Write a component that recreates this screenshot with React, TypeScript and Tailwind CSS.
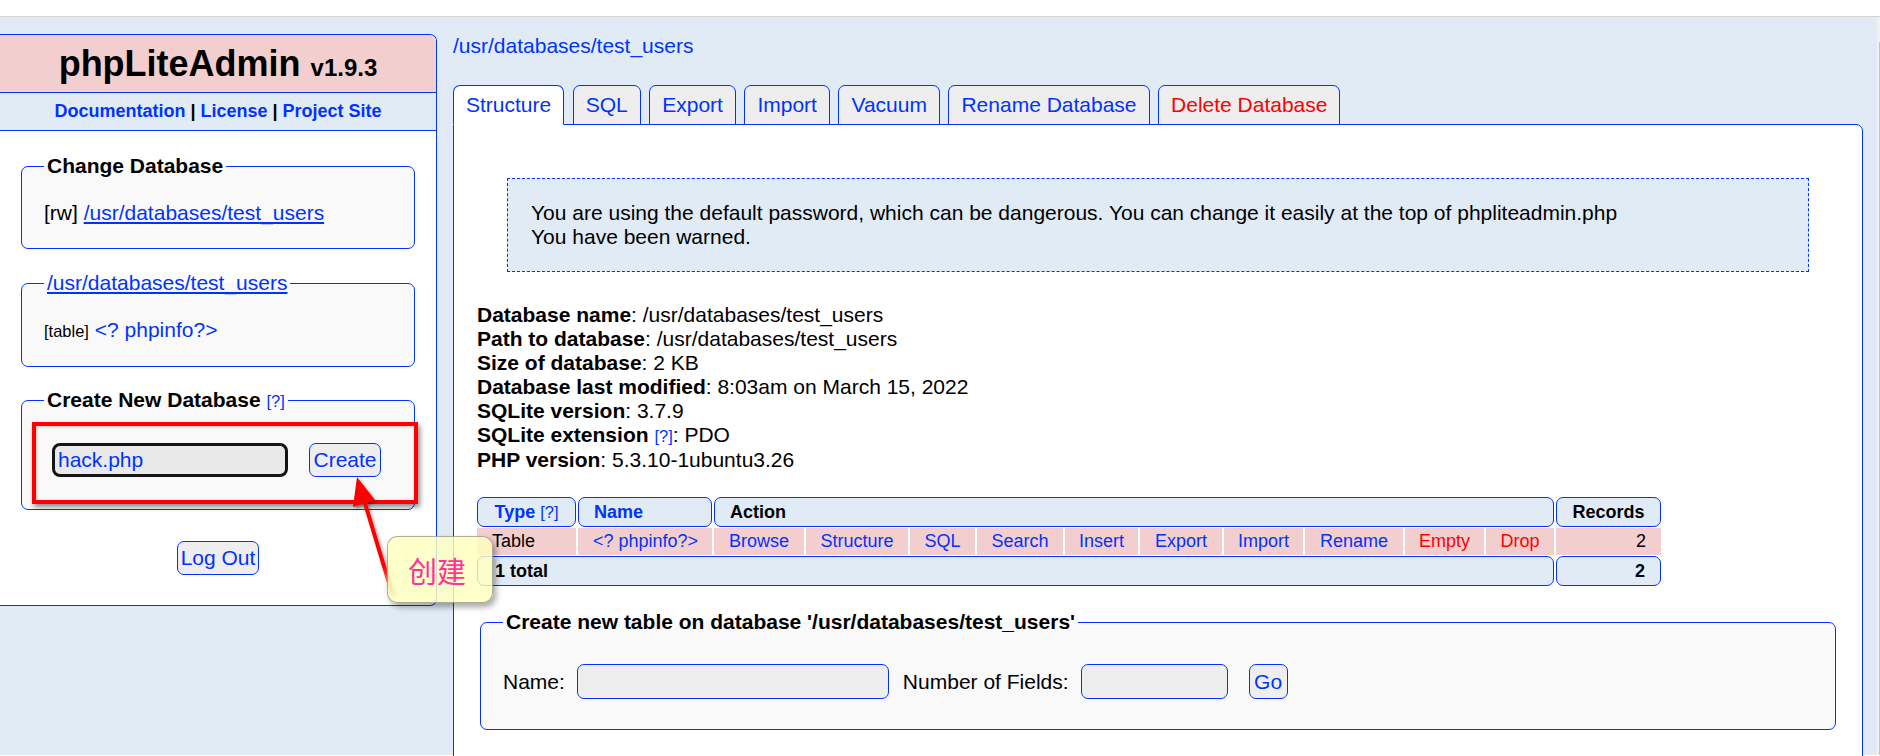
import React from "react";

const actions = [
    { label: "Browse", danger: false },
    { label: "Structure", danger: false },
    { label: "SQL", danger: false },
    { label: "Search", danger: false },
    { label: "Insert", danger: false },
    { label: "Export", danger: false },
    { label: "Import", danger: false },
    { label: "Rename", danger: false },
    { label: "Empty", danger: true },
    { label: "Drop", danger: true },
];

const tabs = [
    { label: "Structure", active: true },
    { label: "SQL" },
    { label: "Export" },
    { label: "Import" },
    { label: "Vacuum" },
    { label: "Rename Database" },
    { label: "Delete Database", danger: true },
];

const info: [string, string, boolean?][] = [
    ["Database name", "/usr/databases/test_users"],
    ["Path to database", "/usr/databases/test_users"],
    ["Size of database", "2 KB"],
    ["Database last modified", "8:03am on March 15, 2022"],
    ["SQLite version", "3.7.9"],
    ["SQLite extension", "PDO", true],
    ["PHP version", "5.3.10-1ubuntu3.26"],
];

function Sidebar() {
    return (
        <div className="mt-[17px] w-[437px] shrink-0 overflow-hidden rounded-r-[7px] border-y border-r border-[#0033ff] bg-white pb-[30px]">
            <h1 className="h-[57px] bg-[#f3cece] text-center text-[36px] font-bold leading-[57px]">
                phpLiteAdmin <span className="text-[24px]">v1.9.3</span>
            </h1>
            <div className="h-[39px] border-y border-[#0033ff] bg-[#e0ebf6] text-center text-[18px] font-bold leading-[37px]">
                <a className="text-[#0033ff]">Documentation</a> | <a className="text-[#0033ff]">License</a> |{" "}
                <a className="text-[#0033ff]">Project Site</a>
            </div>

            {/* Change Database */}
            <fieldset className="mx-[21px] mt-[23px] rounded-[7px] border border-[#0033ff] bg-[#f9f9f9] px-[22px] pb-[23px] pt-[23px]">
                <legend className="px-[3px] font-bold">Change Database</legend>
                <div>
                    [rw] <a className="text-[#0033ff] underline">/usr/databases/test_users</a>
                </div>
            </fieldset>

            {/* Tables of current db */}
            <fieldset className="mx-[21px] mt-[22px] rounded-[7px] border border-[#0033ff] bg-[#f9f9f9] px-[22px] pb-[23px] pt-[23px]">
                <legend className="px-[3px]">
                    <a className="text-[#0033ff] underline">/usr/databases/test_users</a>
                </legend>
                <div>
                    <span className="text-[16.5px]">[table]</span>{" "}
                    <a className="text-[#0033ff]">&lt;? phpinfo?&gt;</a>
                </div>
            </fieldset>

            {/* Create New Database */}
            <fieldset className="mx-[21px] mt-[21px] rounded-[7px] border border-[#0033ff] bg-[#f9f9f9] px-[22px] pb-[24px] pt-[22px]">
                <legend className="px-[3px] font-bold">
                    Create New Database <span className="text-[16.5px] font-normal text-[#0033ff]">[?]</span>
                </legend>
                <div className="flex items-center py-[8px]">
                    <div className="ml-[8px] flex h-[34px] w-[236px] items-center rounded-[8px] border-[3px] border-[#151515] bg-[#e9e9e9] px-[3px] text-[#0033ff]">
                        hack.php
                    </div>
                    <button className="ml-[21px] h-[34px] w-[72px] rounded-[7px] border border-[#0033ff] bg-[#eeeeee] text-[#0033ff]">
                        Create
                    </button>
                </div>
            </fieldset>

            <button className="mx-auto mt-[31px] block h-[34px] w-[82px] rounded-[7px] border border-[#0033ff] bg-[#eeeeee] text-[#0033ff]">
                Log Out
            </button>
        </div>
    );
}

function TableList() {
    return (
        <div className="mt-[25px] grid w-[1184px] grid-cols-[99px_134px_90px_102px_65px_86px_73px_82px_79px_98px_79px_68px_105px] gap-x-[2px] gap-y-px text-[18px] leading-[21px]">
            {/* header */}
            <div className="flex h-[30px] items-center justify-center rounded-[7px] border border-[#0033ff] bg-[#e0ebf6] font-bold text-[#0033ff]">
                Type&nbsp;<span className="text-[16.5px] font-normal">[?]</span>
            </div>
            <div className="flex h-[30px] items-center rounded-[7px] border border-[#0033ff] bg-[#e0ebf6] pl-[15px] font-bold text-[#0033ff]">
                Name
            </div>
            <div className="col-span-10 flex h-[30px] items-center rounded-[7px] border border-[#0033ff] bg-[#e0ebf6] pl-[15px] font-bold">
                Action
            </div>
            <div className="flex h-[30px] items-center justify-center rounded-[7px] border border-[#0033ff] bg-[#e0ebf6] font-bold">
                Records
            </div>

            {/* row */}
            <div className="flex h-[27px] items-center bg-[#f3cece] pl-[15px]">Table</div>
            <div className="flex h-[27px] items-center bg-[#f3cece] pl-[15px] text-[#0033ff]">&lt;? phpinfo?&gt;</div>
            {actions.map((a) => (
                <div
                    key={a.label}
                    className={
                        "flex h-[27px] items-center justify-center bg-[#f3cece] " +
                        (a.danger ? "text-[#ff0000]" : "text-[#0033ff]")
                    }
                >
                    {a.label}
                </div>
            ))}
            <div className="flex h-[27px] items-center justify-end bg-[#f3cece] pr-[15px]">2</div>

            {/* total */}
            <div className="col-span-12 flex h-[30px] items-center rounded-[7px] border border-[#0033ff] bg-[#e0ebf6] pl-[17px] font-bold">
                1 total
            </div>
            <div className="flex h-[30px] items-center justify-end rounded-[7px] border border-[#0033ff] bg-[#e0ebf6] pr-[15px] font-bold">
                2
            </div>
        </div>
    );
}

function Content() {
    return (
        <div className="min-w-0 flex-1 pl-[16px] pr-[14px] pt-[17px]">
            <a className="block text-[#0033ff]">/usr/databases/test_users</a>

            <div className="relative z-10 -mb-px mt-[27px] flex items-end gap-[8.5px]">
                {tabs.map((t) => (
                    <div
                        key={t.label}
                        className={
                            "rounded-t-[7px] border border-[#0033ff] px-[12px] py-[7px] " +
                            (t.active ? "border-b-white bg-white " : "bg-[#eeeeee] ") +
                            (t.danger ? "text-[#ff0000]" : "text-[#0033ff]")
                        }
                    >
                        {t.label}
                    </div>
                ))}
            </div>

            <div className="rounded-b-[7px] rounded-tr-[7px] border border-[#0033ff] bg-white px-[23px] pb-[60px] pt-[23px]">
                <div className="mx-[30px] mt-[30px] border border-dashed border-[#0033ff] bg-[#e0ebf6] px-[23px] py-[22px]">
                    You are using the default password, which can be dangerous. You can change it easily at the top of
                    phpliteadmin.php
                    <br />
                    You have been warned.
                </div>

                <div className="mt-[31px]">
                    {info.map(([k, v, help]) => (
                        <div key={k}>
                            <b>{k}</b>
                            {help && (
                                <>
                                    {" "}
                                    <span className="text-[16.5px] text-[#0033ff]">[?]</span>
                                </>
                            )}
                            : {v}
                        </div>
                    ))}
                </div>

                <TableList />

                <fieldset className="mx-[3px] mt-[24px] rounded-[7px] border border-[#0033ff] bg-[#f9f9f9] px-[22px] pb-[22px] pt-[22px]">
                    <legend className="px-[3px] font-bold">Create new table on database '/usr/databases/test_users'</legend>
                    <div className="flex items-center py-[8px]">
                        <span>Name:</span>
                        <div className="ml-[12px] h-[35px] w-[312px] rounded-[7px] border border-[#0033ff] bg-[#eeeeee]" />
                        <span className="ml-[14px]">Number of Fields:</span>
                        <div className="ml-[12px] h-[35px] w-[147px] rounded-[7px] border border-[#0033ff] bg-[#eeeeee]" />
                        <button className="ml-[21px] h-[35px] w-[39px] rounded-[7px] border border-[#0033ff] bg-[#eeeeee] text-[#0033ff]">
                            Go
                        </button>
                    </div>
                </fieldset>
            </div>
        </div>
    );
}

function Annotations() {
    return (
        <>
            {/* red highlight box */}
            <div className="absolute left-[32px] top-[422px] h-[82px] w-[386px] border-[4px] border-[#ff0000] shadow-[2px_3px_5px_rgba(0,0,0,0.45),inset_1px_1px_3px_rgba(0,0,0,0.2)]" />

            {/* arrow */}
            <svg className="absolute left-[330px] top-[460px]" width="80" height="150" viewBox="0 0 80 150">
                <defs>
                    <linearGradient id="shaft" gradientUnits="userSpaceOnUse" x1="34" y1="42" x2="62" y2="133">
                        <stop offset="0" stopColor="#ff0000" />
                        <stop offset="0.7" stopColor="#ff0000" />
                        <stop offset="1" stopColor="#ffb894" />
                    </linearGradient>
                    <filter id="shadow" x="-50%" y="-50%" width="200%" height="200%">
                        <feDropShadow dx="2" dy="2" stdDeviation="1.5" floodColor="#000" floodOpacity="0.35" />
                    </filter>
                </defs>
                <g filter="url(#shadow)">
                    <line x1="34" y1="40" x2="62" y2="133" stroke="url(#shaft)" strokeWidth="4" strokeLinecap="round" />
                    <polygon points="27,17 23,47 45,40" fill="#ff0000" />
                </g>
            </svg>

            {/* callout */}
            <div className="absolute left-[387px] top-[536px] flex h-[67px] w-[106px] items-center justify-center rounded-[10px] border border-[rgba(120,120,120,0.6)] bg-[rgba(255,255,190,0.82)] pr-[6px] font-['Noto_Sans_CJK_SC',sans-serif] text-[29px] text-[#ff3399] shadow-[3px_4px_6px_rgba(0,0,0,0.35)]">
                创建
            </div>
        </>
    );
}

export default function App() {
    return (
        <div className="relative h-[756px] w-[1880px] overflow-hidden bg-white font-['Liberation_Sans',Arial,Helvetica,sans-serif] text-[21px] leading-[24px] text-black">
            {/* strip left over from the browser toolbar */}
            <div className="h-[17px] border-b border-[#d5d5d5] bg-white" />
            <div className="flex h-[738px]">
                <div className="flex flex-1 items-start bg-[#e0ebf6]">
                    <Sidebar />
                    <Content />
                </div>
                <div className="flex w-[3px] justify-end bg-[#f1f1f1]">
                    <div className="mt-[25px] w-px bg-[#c4c4c4]" />
                </div>
            </div>
            <Annotations />
        </div>
    );
}
